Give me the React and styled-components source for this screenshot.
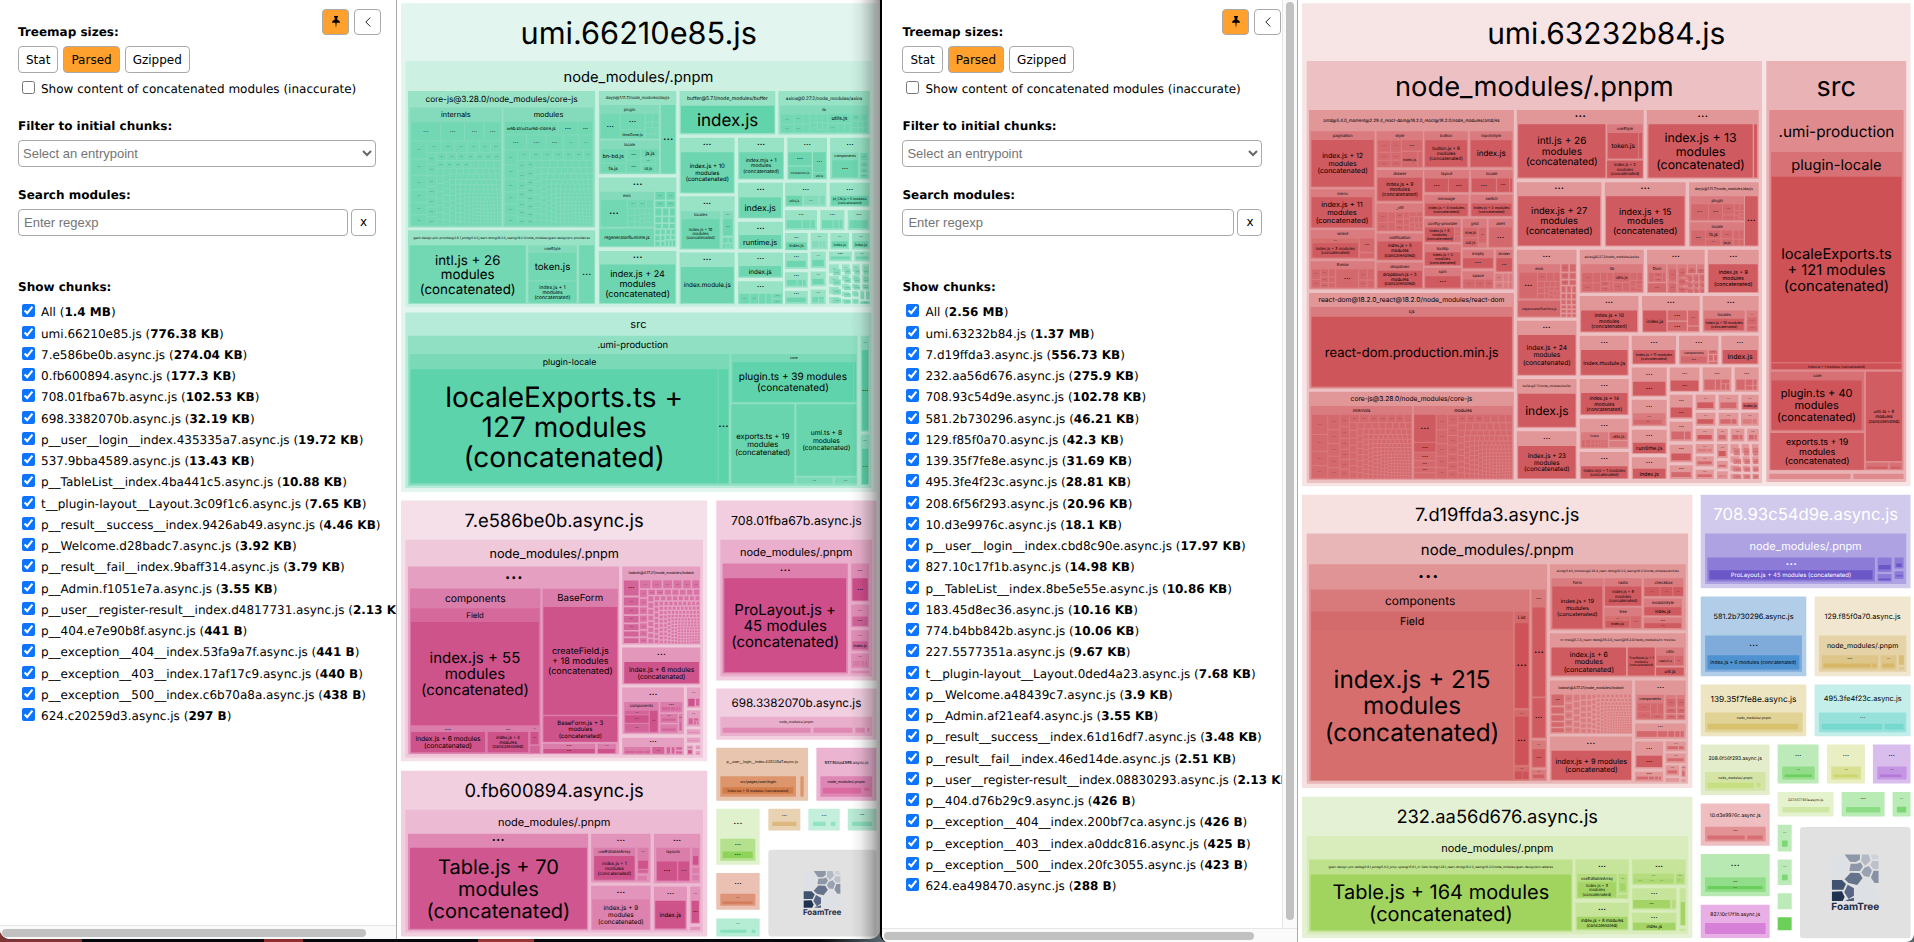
import React from "react";
import styled, { createGlobalStyle, css } from "styled-components";

const GlobalStyle = createGlobalStyle`
  html, body { margin: 0; height: 100%; background: #07080d; }
  *, *::before, *::after { box-sizing: border-box; }
  #root { height: 100%; }
`;

/* ---------- page shell ---------- */

const Desktop = styled.main`
  display: flex;
  min-height: 100vh;
  font-family: Verdana, "DejaVu Sans", sans-serif;
  font-size: 12px;
  text-rendering: geometricPrecision;
  color: #000;
  background: linear-gradient(
    to right,
    #7d3434 0 82px,
    #07080d 82px 264px,
    #8d2f2f 264px 303px,
    #07080d 303px 478px,
    #963737 478px 534px,
    #07080d 534px 820px,
    #55656b 880px
  );
`;

const Window = styled.section`
  position: relative;
  display: flex;
  min-width: 0;
  height: 100vh;
  overflow: hidden;
  background: #fff;
  ${(p) =>
    p.$behind
      ? css`
          flex: 0 1 46%;
          height: calc(100vh - 3px);
          border-radius: 0 0 10px 10px;
          &::after {
            content: "";
            position: absolute;
            inset: 0 0 0 auto;
            width: 30px;
            background: linear-gradient(
              to right,
              rgba(0, 0, 0, 0),
              rgba(0, 0, 0, 0.06) 35%,
              rgba(0, 0, 0, 0.22) 70%,
              rgba(0, 0, 0, 0.42)
            );
          }
        `
      : css`
          flex: 1 1 0;
          border-left: 2px solid #000;
          border-radius: 0 0 8px 8px;
        `}
`;

const Sidebar = styled.aside`
  flex: none;
  width: ${(p) => p.$width}px;
  display: grid;
  grid-template-columns: minmax(0, 1fr) auto;
  grid-template-rows: minmax(0, 1fr) auto;
  border-right: 1px solid #aaa;
  background: #fff;
`;

const Panel = styled.div`
  position: relative;
  overflow: hidden;
  white-space: nowrap;
  padding: 24px 20px 0 ${(p) => p.$inset}px;
`;

const VerticalTrack = styled.div`
  width: 15px;
  padding: 2px 3px 8px;
  display: flex;
  background: #fafafa;
  border-left: 1px solid #e6e6e6;
`;

const HorizontalTrack = styled.div`
  grid-column: 1 / -1;
  height: 14px;
  padding: 3px ${(p) => p.$rest}px 2px 2px;
  display: flex;
  background: #fafafa;
  border-top: 1px solid #e6e6e6;
`;

const Thumb = styled.div`
  flex: 1;
  border-radius: 4px;
  background: #c1c1c1;
`;

const ChartPane = styled.div`
  flex: 1;
  min-width: 0;
  overflow: hidden;
`;

/* ---------- sidebar controls ---------- */

const PanelActions = styled.div`
  position: absolute;
  top: 9px;
  right: ${(p) => p.$right}px;
  display: flex;
  gap: 5px;
`;

const buttonBase = css`
  height: 27px;
  padding: 0 7px;
  border: 1px solid #aaa;
  border-radius: 4px;
  color: #000;
  font: inherit;
  line-height: 16px;
  background: ${(p) => (p.$active ? "#ffa12c" : "#fff")};
`;

const IconButton = styled.button`
  ${buttonBase}
  width: 27px;
  height: 26px;
  padding: 0;
  display: flex;
  align-items: center;
  justify-content: center;
`;

const SizeButton = styled.button`
  ${buttonBase}
`;

const ClearButton = styled.button`
  ${buttonBase}
  width: 25px;
  padding: 0 0 2px;
`;

const Field = styled.div`
  margin-top: ${(p) => p.$gap || 0}px;
`;

const Heading = styled.div`
  display: block;
  margin-bottom: 6px;
  font-weight: bold;
  line-height: 16px;
`;

const ButtonRow = styled.div`
  display: flex;
  gap: ${(p) => p.$gap}px;
`;

const CheckLabel = styled.label`
  display: flex;
  align-items: center;
  gap: 6px;
  height: 21px;
  padding-left: 4px;
  line-height: 23px;

  input {
    width: 13px;
    height: 13px;
    margin: 0 0 2px;
    accent-color: #0e74fd;
  }

  span {
    padding-top: 2px;
  }
`;

const OptionRow = styled.div`
  margin-top: 5px;
`;

const controlBase = css`
  width: 100%;
  height: 27px;
  border: 1px solid #aaa;
  border-radius: 4px;
  background: #fff;
  color: #757575;
  font-family: "Liberation Sans", Arial, sans-serif;
  font-size: 13px;
`;

const SelectBox = styled.div`
  position: relative;

  select {
    ${controlBase}
    appearance: none;
    padding: 0 24px 0 4px;
  }

  svg {
    position: absolute;
    top: 10px;
    right: 4px;
    pointer-events: none;
  }
`;

const SearchInput = styled.input`
  ${controlBase}
  flex: 1;
  min-width: 0;
  padding: 0 5px;

  &::placeholder {
    color: #757575;
  }
`;

const ChunkList = styled.ul`
  margin: 0;
  padding: 0;
  list-style: none;

  li:nth-child(4n + 1) {
    margin-bottom: 1px;
  }
`;

function PinIcon() {
  return (
    <svg width="8" height="12" viewBox="0 0 24 36" aria-hidden="true">
      <path d="M6 0H18V4H16V12C21 13 24 16 24 20H14L12 36L10 20H0C0 16 3 13 8 12V4H6Z" />
    </svg>
  );
}

function CollapseIcon() {
  return (
    <svg width="6" height="10" viewBox="0 0 6 10" fill="none" stroke="#222" aria-hidden="true">
      <path d="M5.3 0.5L0.8 5L5.3 9.5" />
    </svg>
  );
}

function ChevronIcon() {
  return (
    <svg width="10" height="7" viewBox="0 0 10 7" fill="none" stroke="#666" strokeWidth="2" aria-hidden="true">
      <path d="M1 1L5 5L9 1" />
    </svg>
  );
}

function ControlPanel({ id, width, inset, actionsRight, scrollable, rest, chunks }) {
  return (
    <Sidebar $width={width}>
      <Panel $inset={inset}>
        <PanelActions $right={actionsRight}>
          <IconButton type="button" $active aria-label="Pin sidebar">
            <PinIcon />
          </IconButton>
          <IconButton type="button" aria-label="Hide sidebar">
            <CollapseIcon />
          </IconButton>
        </PanelActions>
        <Field>
          <Heading>Treemap sizes:</Heading>
          <ButtonRow $gap={5}>
            <SizeButton type="button">Stat</SizeButton>
            <SizeButton type="button" $active>
              Parsed
            </SizeButton>
            <SizeButton type="button">Gzipped</SizeButton>
          </ButtonRow>
          <OptionRow>
            <CheckLabel>
              <input type="checkbox" />
              <span>Show content of concatenated modules (inaccurate)</span>
            </CheckLabel>
          </OptionRow>
        </Field>
        <Field $gap={19}>
          <Heading as="label" htmlFor={`${id}-entry`}>
            Filter to initial chunks:
          </Heading>
          <SelectBox>
            <select id={`${id}-entry`}>
              <option>Select an entrypoint</option>
            </select>
            <ChevronIcon />
          </SelectBox>
        </Field>
        <Field $gap={20}>
          <Heading as="label" htmlFor={`${id}-search`}>
            Search modules:
          </Heading>
          <ButtonRow $gap={3}>
            <SearchInput id={`${id}-search`} type="text" placeholder="Enter regexp" />
            <ClearButton type="button">x</ClearButton>
          </ButtonRow>
        </Field>
        <Field $gap={43}>
          <Heading>Show chunks:</Heading>
          <ChunkList>
            {chunks.map(([name, size]) => (
              <li key={name}>
                <CheckLabel>
                  <input type="checkbox" defaultChecked />
                  <span>
                    {name} (<strong>{size}</strong>)
                  </span>
                </CheckLabel>
              </li>
            ))}
          </ChunkList>
        </Field>
      </Panel>
      {scrollable && (
        <VerticalTrack aria-hidden="true">
          <Thumb />
        </VerticalTrack>
      )}
      <HorizontalTrack $rest={rest} aria-hidden="true">
        <Thumb />
      </HorizontalTrack>
    </Sidebar>
  );
}

/* ---------- treemap drawing ---------- */

const ChartSvg = styled.svg`
  display: block;
  width: 100%;
  height: auto;
  font-family: Inter, "Liberation Sans", sans-serif;
`;

const D = "…";

/* A group or leaf: edges, fill, label, label size, lower edge of the title band. */
function Cell({ d, ink }) {
  const [x1, y1, x2, y2, fill, label, size, band] = d;
  const cx = (x1 + x2) / 2;
  const cy = (y1 + (band || y2)) / 2;
  let text = null;
  if (label) {
    const lines = label.split("|");
    const s = size || 22;
    const pitch = s * 1.08;
    const drop = label === D ? s * 0.05 : s * 0.38;
    text = lines.map((line, i) => (
      <text key={i} x={cx} y={cy + drop + (i - (lines.length - 1) / 2) * pitch} fontSize={s} textAnchor="middle" fill={ink}>
        {line}
      </text>
    ));
  }
  return (
    <g>
      <rect x={x1} y={y1} width={x2 - x1} height={y2 - y1} fill={fill} rx="2" />
      {text}
    </g>
  );
}

/* Squarified layout of many small modules whose sizes fall off by a power law. */
function squarify(x1, y1, x2, y2, n, flat) {
  const weights = Array.from({ length: n }, (_, i) => Math.pow(i + flat, -1));
  const sum = weights.reduce((a, b) => a + b, 0);
  const areas = weights.map((w) => (w / sum) * (x2 - x1) * (y2 - y1));
  const out = [];
  let x = x1;
  let y = y1;
  let i = 0;
  while (i < n) {
    const w = x2 - x;
    const h = y2 - y;
    const side = Math.min(w, h);
    let row = [];
    let total = 0;
    let worst = Infinity;
    while (i < n) {
      const t = total + areas[i];
      const first = row.length ? row[0] : areas[i];
      const next = Math.max((side * side * first) / (t * t), (t * t) / (side * side * areas[i]));
      if (next > worst) break;
      worst = next;
      total = t;
      row.push(areas[i]);
      i += 1;
    }
    const depth = total / side;
    let at = 0;
    row.forEach((a) => {
      const len = a / depth;
      out.push(w < h ? [x + at, y, len, depth] : [x, y + at, depth, len]);
      at += len;
    });
    if (w < h) y += depth;
    else x += depth;
  }
  return out;
}

function Mosaic({ d, ink }) {
  const [x1, y1, x2, y2, fill, n, gap = 3, flat = 4] = d;
  return (
    <g>
      {squarify(x1, y1, x2, y2, n, flat).map(([x, y, w, h], i) => {
        const g = Math.min(gap, Math.min(w, h) * 0.4);
        return (
          <g key={i}>
            <rect x={x + g / 2} y={y + g / 2} width={w - g} height={h - g} fill={fill} />
            {w > 24 && h > 12 && (
              <text x={x + w / 2} y={y + h / 2 + 1} fontSize={w > 50 ? 20 : 12} textAnchor="middle" fill={ink} opacity={w > 50 ? 1 : 0.6}>
                {D}
              </text>
            )}
          </g>
        );
      })}
    </g>
  );
}

/* A small package: a title band with dots above one or more tiles. */
function Mini({ d, ink }) {
  const [x1, y1, x2, y2, fill, inner, n = 1] = d;
  const h = y2 - y1;
  const pad = Math.min(4, (x2 - x1) * 0.12);
  const top = y1 + h * 0.5;
  return (
    <g>
      <rect x={x1} y={y1} width={x2 - x1} height={h} fill={fill} />
      {h > 26 && (
        <text x={(x1 + x2) / 2} y={y1 + h * 0.26} fontSize={x2 - x1 > 60 ? 18 : 12} textAnchor="middle" fill={ink}>
          {D}
        </text>
      )}
      {squarify(x1 + pad, top, x2 - pad, y2 - pad, n, 1).map(([x, y, w, hh], i) => (
        <rect key={i} x={x + 1} y={y} width={Math.max(w - 3, 1)} height={Math.max(hh - 2, 1)} fill={inner} />
      ))}
    </g>
  );
}

function Part({ dx = 0, dy = 0, ink = "#000", items }) {
  return (
    <g transform={`translate(${dx} ${dy})`}>
      {items.map((it, i) => {
        const [kind, ...d] = it;
        if (kind === "c") return <Cell key={i} d={d} ink={ink} />;
        if (kind === "m") return <Mosaic key={i} d={d} ink={ink} />;
        return <Mini key={i} d={d} ink={ink} />;
      })}
    </g>
  );
}

const LOGO = [
  ["8,0 32,0 50,28 48,46 28,72 0,72 0,8", "#dde1e6"],
  ["38,0 84,0 84,15 72,23 54,22", "#8d97a8"],
  ["90,0 110,0 116,18 100,34 88,20", "#b3bac5"],
  ["117,0 134,0 140,6 140,14 121,15", "#cfd3d9"],
  ["121,20 140,20 140,44 124,44 115,32", "#bcc2cb"],
  ["56,28 74,28 86,24 93,36 84,50 52,50", "#8d97a8"],
  ["97,40 111,35 120,48 112,68 97,66 88,54", "#99a2b2"],
  ["125,49 140,49 140,86 128,86 117,70", "#8791a3"],
  ["38,75 56,55 82,56 92,71 76,92 50,86", "#65738b"],
  ["0,77 30,77 42,89 34,106 0,106", "#3f5270"],
  ["47,91 66,102 66,124 50,134 37,114", "#566684"],
  ["0,112 30,111 38,128 32,140 0,140", "#1f3350"],
  ["40,140 46,136 66,130 66,140", "#4c5d7c"],
  ["98,72 114,75 126,92 140,92 140,134 134,140 72,140 72,106 84,89", "#dde1e6"],
];

function FoamTreeBadge({ x, y, width, height, logo, logoX, logoY, textY, size }) {
  return (
    <g>
      <rect x={x} y={y} width={width} height={height} rx="10" fill="#e1e1e1" />
      <g transform={`translate(${logoX} ${logoY}) scale(${logo / 140})`}>
        {LOGO.map(([points, fill]) => (
          <polygon key={points} points={points} fill={fill} />
        ))}
      </g>
      <text x={logoX + logo / 2} y={textY} fontSize={size} fontWeight="700" textAnchor="middle" fill="#1e2d48">
        FoamTree
      </text>
    </g>
  );
}

const lines3 = (first) => `${first}|modules|(concatenated)`;
const lines2 = (first) => `${first}|(concatenated)`;

const G1 = "#98e2c6";
const G2 = "#84dbbc";
const G3 = "#6dd6b0";
const GT = "#72d7b3";

const greenPackages = [
  ["c", 15, 10, 1440, 1475, "#e2f5ee", "umi.66210e85.js", 92, 183],
  ["c", 28, 183, 1425, 920, "#ccf1e3", "node_modules/.pnpm", 44, 273],
  ["c", 36, 273, 597, 682, G1, "core-js@3.28.0/node_modules/core-js", 25, 322],
  ["c", 42, 322, 317, 679, G2, "internals", 22, 365],
  ["m", 45, 365, 315, 677, GT, 210, 3, 4],
  ["c", 322, 322, 592, 679, G2, "modules", 22, 365],
  ["c", 326, 366, 484, 403, GT, "web.structured-clone.js", 13],
  ["c", 487, 366, 543, 403, GT, D],
  ["c", 546, 366, 589, 403, GT, D, 18],
  ["m", 325, 404, 590, 677, GT, 200, 3, 7],
  ["c", 36, 690, 597, 911, G1, "@ant-design+pro-provider@2.8.7_antd@5.4.0_react-dom@18.2.0_react@18.2.0/node_modules/@ant-design/pro-provider/es", 9, 733],
  ["c", 41, 735, 389, 908, GT, lines3("intl.js + 26"), 40],
  ["c", 396, 735, 542, 908, G2, "useStyle", 12, 757],
  ["c", 398, 758, 540, 840, GT, "token.js", 29],
  ["c", 398, 844, 540, 907, GT, lines3("index.js + 1"), 15],
  ["c", 549, 735, 594, 908, GT, D, 32],

  ["c", 608, 273, 840, 522, G1, "dayjs@1.11.7/node_modules/dayjs", 12, 314],
  ["c", 611, 315, 789, 417, G2, "plugin", 12, 340],
  ["c", 614, 342, 670, 414, GT, D, 26],
  ["c", 673, 342, 745, 387, GT, D, 26],
  ["c", 673, 390, 745, 414, GT, "timeZone.js", 11],
  ["m", 748, 340, 787, 416, GT, 10],
  ["c", 794, 315, 837, 520, GT, D, 36],
  ["c", 611, 420, 789, 520, G2, "locale", 12, 445],
  ["c", 614, 447, 688, 488, GT, "bn-bd.js", 16],
  ["c", 614, 491, 688, 516, GT, "fa.js", 14],
  ["c", 692, 447, 732, 478, GT, D, 16],
  ["c", 692, 481, 732, 516, GT, D, 16],
  ["c", 736, 447, 787, 473, GT, "ja.js", 15],
  ["c", 736, 476, 777, 490, GT, D, 10],
  ["c", 736, 494, 777, 516, GT, "id.js", 12],
  ["c", 780, 476, 787, 516, GT],

  ["c", 608, 532, 840, 741, G1, D, 34, 573],
  ["c", 611, 575, 773, 682, G2, "esm", 12, 598],
  ["c", 614, 600, 692, 679, GT, D, 34],
  ["m", 694, 599, 772, 680, GT, 22],
  ["c", 611, 685, 773, 738, GT, "regeneratorRuntime.js", 13],
  ["m", 775, 573, 838, 739, G3, 26, 5, 7],
  ["c", 608, 752, 840, 911, G1, D, 34, 792],
  ["c", 611, 793, 837, 908, G3, lines3("index.js + 24"), 27],

  ["c", 850, 273, 1137, 403, G1, "buffer@5.7.1/node_modules/buffer", 15, 314],
  ["c", 854, 317, 1134, 399, "#62d4ab", "index.js", 51],
  ["c", 1146, 273, 1420, 403, G1, "axios@0.27.2/node_modules/axios", 14, 314],
  ["c", 1151, 316, 1415, 399, G2, "lib", 11, 341],
  ["m", 1153, 342, 1293, 398, GT, 14],
  ["c", 1296, 342, 1362, 368, GT, "utils.js", 16],
  ["m", 1295, 370, 1363, 398, GT, 3],
  ["m", 1364, 342, 1413, 398, GT, 8],

  ["c", 850, 413, 1015, 580, G1, D, 30, 454],
  ["c", 854, 456, 1012, 577, G3, lines3("index.js + 10"), 18],
  ["c", 1025, 413, 1163, 538, G1, D, 28, 454],
  ["c", 1029, 456, 1160, 535, G3, lines3("index.mjs + 1"), 15],
  ["c", 1173, 413, 1292, 538, G1, D, 26, 454],
  ["c", 1176, 456, 1246, 496, G3, D],
  ["c", 1176, 499, 1246, 535, G3, "conversion.js", 9],
  ["c", 1250, 456, 1288, 516, G3, D, 20],
  ["c", 1250, 518, 1288, 535, G3, "util.js", 9],
  ["c", 1301, 413, 1420, 538, G1, D, 26, 454],
  ["c", 1306, 457, 1386, 533, G2, "components", 11, 478],
  ["c", 1308, 480, 1383, 531, G3, D],
  ["m", 1390, 457, 1415, 535, GT, 4],
  ["c", 850, 588, 1015, 748, G1, D, 28, 632],
  ["c", 854, 633, 972, 746, G2, "locales", 12, 655],
  ["c", 857, 657, 969, 743, G3, lines3("index.js + 10"), 12],
  ["c", 979, 633, 1010, 707, G2, D, 12, 655],
  ["c", 981, 657, 1008, 705, G3, D, 14],
  ["m", 978, 711, 1010, 746, GT, 5],
  ["c", 1025, 548, 1160, 655, G1, D, 28, 590],
  ["c", 1029, 591, 1154, 652, G3, "index.js", 26],
  ["c", 1166, 548, 1290, 620, G1, D, 24, 586],
  ["c", 1170, 587, 1217, 616, G3, "utils.js", 10],
  ["c", 1222, 587, 1266, 614, G2, D, 12],
  ["c", 1270, 587, 1285, 614, G2],
  ["c", 1300, 548, 1420, 620, G1, D, 24, 586],
  ["c", 1304, 587, 1416, 616, G3, lines2("pt_CN.js + 5 modules"), 10],
  ["c", 1025, 665, 1160, 747, G1, D, 28, 703],
  ["c", 1029, 704, 1154, 745, G3, "runtime.js", 22],
  ["s", 1166, 630, 1262, 690, G1, GT, 3],
  ["s", 1272, 630, 1344, 690, G1, GT, 3],
  ["s", 1354, 630, 1420, 690, G1, GT],
  ["c", 850, 757, 1015, 912, G1, D, 30, 799],
  ["c", 854, 800, 1012, 908, G3, "index.module.js", 19],
  ["c", 1025, 757, 1160, 833, G1, D, 26, 796],
  ["c", 1029, 797, 1154, 829, G3, "index.js", 19],
  ["c", 1025, 843, 1160, 912, G1, D, 26, 877],
  ["m", 1028, 879, 1158, 910, GT, 6],
  ["c", 1166, 698, 1234, 750, G1, D, 16, 725],
  ["c", 1169, 726, 1231, 748, G3, "index.js", 12],
  ["s", 1243, 698, 1294, 748, G1, G2, 4],
  ["c", 1302, 698, 1358, 748, G1, D, 12, 722],
  ["c", 1306, 723, 1354, 742, G3, "index.js", 10],
  ["c", 1367, 698, 1420, 748, G1, D, 12, 722],
  ["c", 1371, 723, 1416, 742, G3, "index.js", 10],
  ["s", 1166, 758, 1234, 806, G1, G3],
  ["s", 1166, 816, 1234, 862, G1, GT, 3],
  ["s", 1166, 872, 1234, 912, G1, G3],
  ["s", 1243, 754, 1288, 804, G1, G3],
  ["s", 1243, 814, 1288, 858, G1, G3],
  ["s", 1243, 868, 1288, 912, G1, GT, 3],
  ["s", 1298, 754, 1366, 783, G1, GT],
  ["s", 1374, 754, 1420, 783, G1, GT],
  ["m", 1294, 788, 1422, 914, G1, 20, 9, 12],
  ["m", 1304, 800, 1422, 914, G2, 20, 22, 12],

  ["c", 28, 937, 1425, 1463, "#b6ebd9", "src", 33, 1006],
  ["c", 36, 1006, 1383, 1456, "#90e1c3", ".umi-production", 28, 1060],
  ["c", 41, 1061, 999, 1452, "#7ad9b7", "plugin-locale", 26, 1106],
  ["c", 44, 1107, 964, 1448, "#5cd3aa", "localeExports.ts +|127 modules|(concatenated)", 84],
  ["c", 967, 1107, 996, 1448, "#5cd3aa", D, 36],
  ["c", 1005, 1061, 1380, 1207, "#7ad9b7", "core", 11, 1085],
  ["c", 1009, 1086, 1370, 1204, "#5fd3ab", lines2("plugin.ts + 39 modules"), 30],
  ["c", 1373, 1086, 1379, 1204, "#5fd3ab"],
  ["c", 1005, 1212, 1194, 1449, "#68d5ae", lines3("exports.ts + 19"), 23],
  ["c", 1200, 1212, 1380, 1426, "#68d5ae", lines3("umi.ts + 8"), 20],
  ["c", 1200, 1431, 1308, 1449, "#7ad9b7", D, 12],
  ["c", 1316, 1431, 1380, 1449, "#7ad9b7", D, 12],
  ["c", 1393, 1006, 1418, 1294, "#90e1c3", D, 12, 1048],
  ["c", 1397, 1049, 1415, 1290, "#5cd3aa", D, 22],
  ["c", 1393, 1302, 1418, 1454, "#90e1c3", D, 12, 1342],
  ["c", 1397, 1345, 1415, 1451, "#5cd3aa", D, 20],
];

const P1 = "#e59fc1";
const P2 = "#db7dab";
const P3 = "#d2649a";
const PL = "#cf538b";

const pinkChunks = [
  ["c", 15, 15, 933, 797, "#f5dfe8", "7.e586be0b.async.js", 55, 133],
  ["c", 28, 133, 920, 786, "#efc8da", "node_modules/.pnpm", 38, 213],
  ["c", 36, 213, 669, 776, P1, D, 64, 279],
  ["c", 42, 279, 433, 774, P2, "components", 31, 338],
  ["c", 44, 338, 430, 690, "#d6699b", "Field", 23, 378],
  ["c", 45, 379, 428, 688, PL, lines3("index.js + 55"), 45],
  ["c", 44, 694, 268, 772, P2, D, 22, 708],
  ["c", 45, 709, 267, 770, PL, lines2("index.js + 6 modules"), 20],
  ["c", 273, 694, 398, 772, P2, D, 16, 708],
  ["c", 275, 709, 396, 770, PL, lines3("index.js + 4"), 13],
  ["c", 402, 694, 430, 748, P2, D, 10, 708],
  ["c", 403, 709, 427, 746, PL, D, 12],
  ["c", 402, 751, 430, 772, P3],
  ["c", 439, 280, 665, 740, P2, "BaseForm", 29, 333],
  ["c", 442, 334, 663, 657, PL, "createField.js|+ 18 modules|(concatenated)", 27],
  ["c", 442, 662, 663, 738, PL, lines3("BaseForm.js + 3"), 18],
  ["c", 441, 744, 597, 774, P2, D, 18, 758],
  ["c", 442, 760, 596, 772, PL, D, 16],
  ["c", 604, 744, 660, 774, P2, D, 14, 758],
  ["c", 605, 760, 656, 772, PL],
  ["c", 678, 213, 912, 447, P1, "lodash@4.17.21/node_modules/lodash", 11, 252],
  ["c", 683, 255, 727, 300, P3, D, 22],
  ["c", 683, 306, 727, 330, P3, D, 12],
  ["c", 683, 335, 727, 356, P3, D, 12],
  ["c", 683, 361, 727, 381, P3, D, 12],
  ["c", 683, 386, 727, 403, P3, D, 12],
  ["c", 683, 408, 727, 423, P3],
  ["c", 683, 428, 727, 442, P3],
  ["m", 729, 252, 911, 445, "#d973a4", 190, 5, 12],
  ["c", 678, 456, 912, 567, "#e397bb", D, 32, 497],
  ["c", 684, 499, 908, 563, PL, lines2("index.js + 6 modules"), 20],
  ["c", 678, 576, 863, 716, P1, D, 30, 618],
  ["c", 684, 619, 787, 712, P2, "components", 12, 643],
  ["c", 687, 645, 757, 656, P3, D, 10],
  ["c", 687, 659, 757, 681, PL, D, 14],
  ["c", 687, 685, 757, 708, P3, D, 14],
  ["c", 761, 645, 784, 708, PL, D, 12],
  ["s", 792, 619, 858, 650, P2, P3, 4],
  ["s", 792, 655, 844, 682, P2, P3],
  ["s", 792, 686, 844, 711, P2, P3],
  ["s", 848, 655, 858, 706, P2, P3],
  ["c", 872, 576, 912, 636, P1, D, 14, 608],
  ["c", 876, 609, 895, 632, PL],
  ["c", 899, 609, 909, 630, P3],
  ["s", 872, 644, 912, 692, P1, P3, 4],
  ["s", 872, 701, 912, 717, P1, P2],
  ["s", 872, 726, 912, 741, P1, P2],
  ["c", 678, 726, 863, 778, P1, D, 26, 752],
  ["c", 683, 754, 763, 774, P2],
  ["m", 685, 764, 762, 774, P3, 3],
  ["c", 768, 754, 804, 774, P3, D, 10],
  ["m", 809, 752, 860, 776, P3, 4, 5, 8],
  ["s", 872, 749, 891, 778, P1, PL],
  ["s", 898, 749, 912, 761, P1, P2],
  ["s", 898, 766, 912, 778, P1, P2],

  ["c", 960, 15, 1440, 555, "#f1cddf", "708.01fba67b.async.js", 37, 133],
  ["c", 972, 133, 1427, 543, "#e9afcc", "node_modules/.pnpm", 33, 204],
  ["c", 979, 204, 1354, 534, "#dd80ae", D, 38, 247],
  ["c", 984, 248, 1349, 529, "#cd4e89", "ProLayout.js +|45 modules|(concatenated)", 45],
  ["c", 1364, 204, 1418, 318, "#e28fb8", D, 16, 247],
  ["c", 1368, 248, 1414, 315, "#cd4e89", D, 22],
  ["c", 1364, 327, 1418, 395, "#e28fb8", D, 14, 362],
  ["c", 1368, 363, 1414, 391, P3, D, 16],
  ["c", 1364, 404, 1418, 466, "#e28fb8", D, 14, 436],
  ["c", 1368, 437, 1414, 461, P3, "index.js", 11],
  ["s", 1364, 474, 1418, 518, "#e28fb8", P2, 3],
  ["c", 1364, 525, 1418, 534, "#e28fb8"],

  ["c", 960, 579, 1440, 732, "#f1cee0", "698.3382070b.async.js", 35, 663],
  ["c", 972, 663, 1427, 721, "#e9aecb", "node_modules/.pnpm", 10, 695],
  ["c", 979, 696, 1243, 711, "#df88b3"],
  ["c", 1251, 696, 1368, 711, "#df88b3"],
  ["c", 1377, 696, 1405, 711, "#df88b3"],
  ["c", 1412, 696, 1419, 708, "#df88b3"],
];

const leftBottom = [
  ["c", 15, 90, 933, 587, "#f1cfdf", "0.fb600894.async.js", 55, 207],
  ["c", 28, 207, 920, 575, "#ecbad3", "node_modules/.pnpm", 33, 279],
  ["c", 36, 279, 576, 568, "#de88b3", D, 46, 320],
  ["c", 42, 321, 572, 564, "#cf568f", lines3("Table.js + 70"), 60],
  ["c", 585, 279, 763, 425, "#e294bb", D, 30, 320],
  ["c", 592, 321, 717, 420, P2, "useEditableArray", 12, 345],
  ["c", 594, 346, 715, 417, PL, lines3("index.js + 1"), 14],
  ["c", 724, 321, 757, 398, P2, D, 12, 345],
  ["c", 726, 360, 755, 384, PL],
  ["c", 726, 388, 755, 396, P3],
  ["c", 724, 405, 752, 419, P2],
  ["c", 585, 435, 763, 568, "#e294bb", D, 30, 475],
  ["c", 588, 476, 760, 565, "#dd82ae", lines3("index.js + 9"), 19],
  ["c", 773, 279, 912, 427, "#e294bb", D, 28, 320],
  ["c", 780, 321, 881, 422, P2, "layouts", 12, 345],
  ["c", 782, 362, 842, 419, PL, D, 24],
  ["c", 846, 362, 879, 419, PL, D, 20],
  ["c", 888, 321, 908, 375, P2],
  ["c", 890, 346, 906, 372, PL],
  ["c", 888, 381, 908, 398, P2],
  ["c", 888, 403, 908, 419, P2],
  ["c", 773, 437, 872, 568, "#e294bb", D, 26, 478],
  ["c", 777, 480, 868, 563, PL, "index.js", 18],
  ["c", 882, 437, 912, 549, "#e294bb", D, 14, 478],
  ["c", 886, 480, 908, 546, PL, D, 18],
  ["c", 882, 558, 912, 568, "#e294bb"],

  ["c", 960, 21, 1235, 180, "#e8c5ae", "p__user__login__index.435335a7.async.js", 11, 107],
  ["c", 972, 107, 1199, 168, "#dd966c", "src/pages/user/login", 11, 139],
  ["c", 979, 140, 1191, 159, "#d27c49", "index.tsx + 15 modules (concatenated)", 10],
  ["c", 1212, 107, 1222, 168, "#dd966c"],
  ["c", 1260, 21, 1440, 180, "#ebb5d2", "537.9bba4589.async.js", 12, 107],
  ["c", 1272, 107, 1427, 168, "#de86b4", "node_modules/.pnpm", 11, 140],
  ["c", 1280, 141, 1394, 158, "#d9699f"],
  ["c", 1404, 141, 1419, 150, "#d9699f"],
  ["c", 960, 204, 1090, 372, "#dff2cd", D, 32, 294],
  ["c", 972, 294, 1077, 360, "#b5e08e", D, 22, 332],
  ["c", 979, 332, 1069, 352, "#8fd35a", D, 22],
  ["c", 1116, 204, 1212, 269, "#e8d2b2", D, 18, 243],
  ["c", 1128, 243, 1200, 256, "#ddb87e"],
  ["c", 1236, 204, 1330, 269, "#c3efdc", D, 18, 243],
  ["c", 1250, 243, 1288, 256, "#93e2c4"],
  ["c", 1303, 243, 1317, 256, "#93e2c4"],
  ["c", 1354, 204, 1440, 269, "#b9ebd5", D, 16, 243],
  ["c", 1367, 243, 1427, 256, "#8bdebe"],
  ["c", 960, 397, 1090, 507, "#ebc1b3", D, 26, 459],
  ["c", 972, 459, 1077, 495, "#de9478", D, 12, 480],
  ["c", 979, 482, 1069, 489, "#d37a5b"],
  ["c", 960, 533, 1090, 587, "#b5ecd4", D, 14, 567],
  ["c", 972, 567, 1051, 576, "#87dfbd"],
  ["c", 1066, 567, 1077, 576, "#87dfbd"],
];

const R1 = "#e19698";
const R2 = "#da7b7f";
const R3 = "#cf5a5f";
const RT = "#d4696d";

const antdPackages = [
  ["c", 36, 10, 1863, 1460, "#f7e5e5", "umi.63232b84.js", 90, 183],
  ["c", 50, 183, 1417, 1450, "#edc1c3", "node_modules/.pnpm", 82, 330],
  ["c", 57, 330, 672, 869, R1, "antd@5.4.0_moment@2.29.4_react-dom@18.2.0_react@18.2.0/node_modules/antd/es", 13, 394],
  ["c", 62, 394, 254, 563, R2, "pagination", 12, 419],
  ["c", 65, 420, 251, 560, R3, lines3("index.js + 12"), 21],
  ["c", 62, 568, 254, 685, R2, "menu", 12, 591],
  ["c", 65, 592, 247, 682, R3, lines3("index.js + 11"), 22],
  ["c", 62, 690, 254, 777, R2, "select", 12, 714],
  ["c", 66, 716, 206, 774, "#d6706f", D, 12, 729],
  ["c", 68, 730, 204, 772, R3, lines2("index.js + 3 modules"), 12],
  ["c", 210, 716, 252, 756, RT, D, 16],
  ["c", 210, 760, 252, 774, RT],
  ["c", 62, 784, 254, 866, R2, "theme", 12, 807],
  ["m", 64, 807, 136, 864, RT, 8],
  ["c", 139, 808, 204, 863, RT, D, 24],
  ["m", 206, 807, 253, 864, RT, 4],
  ["c", 260, 394, 399, 503, R2, "style", 12, 419],
  ["m", 262, 420, 334, 502, RT, 6],
  ["c", 336, 421, 396, 452, RT, D, 18],
  ["c", 336, 456, 382, 501, RT, "index.js", 11],
  ["c", 385, 456, 396, 501, RT],
  ["c", 260, 510, 399, 605, R2, "drawer", 12, 533],
  ["c", 263, 534, 396, 602, R3, lines3("index.js + 9"), 15],
  ["c", 260, 611, 399, 694, R2, "_util", 12, 635],
  ["m", 262, 636, 398, 693, RT, 20],
  ["c", 260, 701, 399, 782, R2, "notification", 12, 724],
  ["c", 263, 725, 396, 779, R3, lines3("index.js + 5"), 13],
  ["c", 260, 788, 399, 866, R2, "dropdown", 12, 812],
  ["c", 263, 813, 396, 863, R3, lines3("dropdown.js + 3"), 13],
  ["c", 403, 394, 534, 503, R2, "button", 12, 419],
  ["c", 406, 421, 531, 500, R3, lines3("button.js + 6"), 14],
  ["c", 540, 394, 668, 503, R2, "input/style", 12, 419],
  ["c", 543, 421, 665, 500, R3, "index.js", 24],
  ["c", 403, 510, 538, 578, R2, "layout", 12, 534],
  ["c", 406, 536, 474, 576, R3, D],
  ["c", 477, 536, 535, 576, R3, D],
  ["c", 543, 510, 668, 578, R2, "locale", 12, 534],
  ["c", 546, 536, 618, 576, R3, D],
  ["c", 622, 536, 658, 576, R3, D, 18],
  ["c", 661, 536, 667, 576, R3],
  ["c", 403, 585, 536, 650, R2, "message", 12, 609],
  ["c", 406, 611, 533, 648, R3, lines2("index.js + 4 modules"), 11],
  ["c", 542, 585, 668, 650, R2, "switch", 12, 609],
  ["c", 545, 611, 665, 648, R3, lines2("index.js + 3 modules"), 11],
  ["c", 403, 657, 513, 728, R2, "config-provider", 12, 682],
  ["c", 406, 683, 492, 725, R3, lines3("index.js + 5"), 11],
  ["m", 494, 682, 512, 726, RT, 4],
  ["c", 518, 657, 591, 743, R2, "grid", 12, 682],
  ["c", 520, 684, 563, 712, RT, "row.js", 12],
  ["c", 520, 716, 563, 741, RT, "col.js", 12],
  ["c", 567, 684, 588, 728, RT, D, 12],
  ["c", 596, 657, 668, 743, R2, "alert", 12, 682],
  ["c", 598, 683, 666, 741, RT, D, 26],
  ["c", 403, 733, 513, 798, R2, "tooltip", 12, 756],
  ["c", 406, 757, 511, 796, R3, lines3("index.js + 3"), 11],
  ["c", 403, 804, 513, 866, R2, "spin", 12, 828],
  ["c", 406, 829, 511, 863, R3, D, 24],
  ["c", 518, 750, 611, 807, R2, "empty", 12, 773],
  ["c", 520, 775, 609, 804, R3, D],
  ["c", 518, 814, 611, 866, R2, "space", 12, 838],
  ["m", 519, 838, 610, 865, RT, 3],
  ["c", 618, 750, 668, 816, R2, "divider", 11, 773],
  ["c", 620, 775, 666, 814, R3, D, 18],
  ["m", 615, 820, 669, 867, R2, 6],
  ["c", 57, 880, 672, 1167, R1, "react-dom@18.2.0_react@18.2.0/node_modules/react-dom", 20, 921],
  ["c", 62, 922, 668, 1163, R2, "cjs", 13, 950],
  ["c", 65, 951, 666, 1160, "#ce555a", "react-dom.production.min.js", 39],
  ["c", 57, 1176, 672, 1440, R1, "core-js@3.28.0/node_modules/core-js", 20, 1218],
  ["c", 62, 1219, 367, 1438, R2, "internals", 13, 1243],
  ["m", 64, 1244, 365, 1436, RT, 210, 3, 5],
  ["c", 371, 1219, 668, 1438, R2, "modules", 13, 1243],
  ["c", 373, 1245, 437, 1326, R3, D, 32],
  ["c", 373, 1329, 437, 1356, R3, D],
  ["c", 373, 1359, 437, 1382, RT, D],
  ["c", 373, 1385, 437, 1401, RT, D, 16],
  ["c", 373, 1404, 437, 1418, RT, D, 16],
  ["c", 373, 1421, 437, 1435, RT],
  ["m", 439, 1244, 667, 1436, RT, 180, 3, 9],
];

const redPackages = [
  ["c", 51, 30, 432, 237, R1, D, 40, 71],
  ["c", 55, 73, 317, 233, R3, lines3("intl.js + 26"), 30],
  ["c", 322, 73, 429, 178, R2, "useStyle", 12, 97],
  ["c", 325, 99, 415, 175, R3, "token.js", 19],
  ["c", 418, 99, 427, 175, R3],
  ["c", 322, 182, 429, 234, R3, lines3("index.js + 2"), 12],
  ["c", 441, 30, 777, 237, R1, D, 38, 71],
  ["c", 446, 73, 759, 233, R3, lines3("index.js + 13"), 37],
  ["c", 763, 73, 772, 233, R3],
  ["c", 51, 247, 305, 440, R1, D, 34, 287],
  ["c", 55, 289, 301, 437, R3, lines3("index.js + 27"), 28],
  ["c", 315, 247, 558, 440, R1, D, 34, 287],
  ["c", 319, 289, 554, 437, R3, lines3("index.js + 15"), 27],
  ["c", 568, 247, 777, 440, R1, "dayjs@1.11.7/node_modules/dayjs", 11, 287],
  ["c", 572, 289, 733, 363, R2, "plugin", 12, 312],
  ["c", 575, 313, 625, 360, RT, D, 20],
  ["c", 628, 313, 667, 360, RT, D, 18],
  ["c", 670, 313, 702, 343, RT, D, 12],
  ["c", 670, 346, 702, 360, RT],
  ["m", 704, 312, 733, 361, RT, 7],
  ["c", 572, 367, 733, 438, R2, "locale", 12, 390],
  ["c", 575, 392, 616, 436, RT, D, 18],
  ["c", 619, 392, 662, 415, RT, "fa.js", 13],
  ["c", 619, 418, 662, 436, RT, D, 12],
  ["c", 666, 392, 698, 415, RT, D, 12],
  ["c", 666, 418, 698, 436, RT, "ja.js", 11],
  ["m", 701, 391, 732, 437, RT, 4],
  ["c", 736, 289, 774, 437, R3, D, 30],
  ["c", 51, 450, 230, 654, R1, D, 28, 491],
  ["c", 55, 493, 181, 599, R2, "esm", 12, 517],
  ["c", 59, 519, 111, 594, RT, D, 28],
  ["m", 113, 518, 180, 596, RT, 18],
  ["c", 55, 602, 181, 650, RT, "regeneratorRuntime.js", 10],
  ["m", 183, 491, 230, 653, RT, 24, 5, 8],
  ["c", 240, 450, 432, 580, R1, "axios@0.27.2/node_modules/axios", 10, 491],
  ["c", 244, 493, 429, 577, R2, "lib", 12, 517],
  ["m", 246, 518, 340, 575, RT, 9],
  ["c", 342, 519, 389, 546, RT, "utils.js", 12],
  ["m", 341, 548, 390, 575, RT, 2],
  ["m", 391, 518, 428, 575, RT, 7],
  ["c", 442, 450, 615, 580, R1, D, 28, 491],
  ["c", 445, 493, 499, 547, R2, "Dom", 12, 517],
  ["m", 446, 518, 498, 546, RT, 4],
  ["c", 445, 550, 499, 577, RT, D, 14],
  ["m", 502, 492, 614, 578, R2, 16],
  ["m", 504, 504, 616, 582, RT, 16, 9],
  ["c", 624, 450, 777, 580, R1, D, 28, 491],
  ["c", 627, 493, 774, 577, R3, lines3("index.js + 9"), 16],
  ["c", 240, 589, 416, 698, R1, D, 28, 630],
  ["c", 244, 632, 412, 695, R3, lines3("index.js + 10"), 15],
  ["c", 427, 589, 600, 698, R1, D, 28, 630],
  ["c", 430, 632, 500, 695, R3, "index.js", 14],
  ["c", 504, 632, 561, 662, RT, D],
  ["c", 504, 666, 561, 693, RT, D],
  ["c", 565, 632, 597, 677, RT, D, 14],
  ["c", 565, 680, 597, 694, RT],
  ["c", 609, 589, 777, 698, R1, D, 28, 630],
  ["c", 612, 632, 735, 694, R2, "locales", 12, 655],
  ["c", 615, 657, 732, 691, R3, lines2("index.js + 10 modules"), 11],
  ["m", 739, 631, 775, 696, R2, 3],
  ["m", 742, 652, 773, 694, RT, 2],
  ["c", 51, 663, 230, 828, R1, D, 28, 704],
  ["c", 55, 706, 227, 825, R3, lines3("index.js + 24"), 20],
  ["c", 240, 708, 387, 828, R1, D, 26, 749],
  ["c", 244, 751, 383, 825, R3, "index.module.js", 17],
  ["c", 396, 708, 529, 794, R1, D, 26, 749],
  ["c", 400, 751, 525, 791, R3, lines2("index.js + 11 modules"), 11],
  ["c", 538, 708, 656, 794, R1, D, 26, 749],
  ["c", 542, 751, 623, 791, R2, "components", 10, 769],
  ["c", 544, 770, 621, 789, RT, D, 16],
  ["m", 626, 750, 654, 793, RT, 4, 4],
  ["c", 665, 708, 777, 794, R1, D, 24, 749],
  ["c", 669, 751, 773, 791, R3, "index.js", 21],
  ["c", 51, 838, 230, 985, R1, "buffer@5.7.1/node_modules/buffer", 9, 881],
  ["c", 55, 882, 227, 981, R3, "index.js", 36],
  ["c", 240, 838, 387, 947, R1, D, 26, 879],
  ["c", 244, 880, 383, 944, R3, lines3("index.js + 14"), 15],
  ["c", 396, 803, 501, 890, R1, D, 24, 845],
  ["c", 400, 846, 497, 887, R3, D, 24],
  ["c", 396, 900, 501, 980, R1, D, 22, 940],
  ["c", 400, 941, 497, 977, R2, D, 14, 960],
  ["c", 402, 960, 486, 974, RT, D, 12],
  ["c", 396, 990, 501, 1063, R1, D, 24, 1028],
  ["c", 400, 1029, 497, 1060, R3, "runtime.js", 17],
  ["c", 396, 1073, 501, 1138, R1, D, 24, 1106],
  ["c", 400, 1107, 497, 1136, R3, "index.js", 16],
  ["c", 240, 957, 387, 1047, R1, D, 26, 997],
  ["c", 244, 998, 325, 1044, R2, "Icons", 10, 1021],
  ["m", 245, 1020, 324, 1043, RT, 16],
  ["c", 329, 998, 383, 1020, RT, "utils.js", 12],
  ["c", 329, 1024, 383, 1042, R2],
  ["c", 240, 1057, 387, 1138, R1, D, 26, 1098],
  ["c", 244, 1100, 383, 1136, R3, lines2("index.mjs + 1 modules"), 12],
  ["c", 51, 995, 230, 1138, R1, D, 26, 1037],
  ["c", 55, 1039, 227, 1136, R3, lines3("index.js + 23"), 19],
  ["c", 510, 803, 599, 876, R1, D, 18, 841],
  ["c", 513, 842, 596, 873, R3, D, 18],
  ["s", 609, 803, 695, 876, R1, RT, 5],
  ["s", 705, 803, 777, 876, R1, RT, 5],
  ["c", 510, 885, 579, 957, R1, D, 18, 922],
  ["c", 513, 923, 576, 953, R3, D, 18],
  ["s", 588, 885, 647, 931, R1, R3],
  ["s", 657, 885, 716, 931, R1, RT],
  ["c", 725, 885, 777, 931, R1, D, 12, 907],
  ["c", 728, 908, 774, 928, R3, "index.js", 11],
  ["s", 588, 939, 647, 978, R1, R3],
  ["s", 657, 939, 716, 978, R1, RT, 2],
  ["s", 724, 939, 777, 978, R1, R2, 2],
  ["s", 510, 966, 579, 1025, R1, RT, 2],
  ["s", 510, 1035, 579, 1088, R1, R3],
  ["s", 510, 1097, 579, 1138, R1, RT],
  ["s", 588, 987, 642, 1025, R1, R3],
  ["s", 652, 987, 684, 1025, R1, RT],
  ["s", 693, 987, 734, 1025, R1, RT, 2],
  ["s", 743, 987, 777, 1025, R1, RT, 2],
  ["s", 588, 1033, 642, 1062, R1, R2, 2],
  ["s", 588, 1070, 642, 1100, R1, RT],
  ["s", 588, 1110, 642, 1138, R1, RT],
  ["s", 652, 1033, 684, 1075, R1, R3],
  ["s", 652, 1084, 684, 1107, R1, RT],
  ["s", 652, 1115, 684, 1138, R1, R2, 2],
  ["m", 688, 1029, 781, 1142, R1, 12, 9, 12],
  ["m", 696, 1040, 781, 1142, R2, 12, 19, 12],

  ["c", 800, -117, 1220, 1147, "#e9b2b5", "src", 81, 30],
  ["c", 809, 30, 1212, 1112, "#df8b8e", ".umi-production", 46, 155],
  ["c", 814, 156, 1207, 810, "#d77175", "plugin-locale", 44, 230],
  ["c", 816, 231, 1205, 787, "#cd5155", "localeExports.ts|+ 121 modules|(concatenated)", 44],
  ["c", 816, 791, 1205, 808, "#cd5155", "index.ts + 1 modules (concatenated)", 10],
  ["c", 814, 816, 1093, 993, "#d77175", "core", 12, 840],
  ["c", 816, 842, 1086, 990, "#ce5459", lines3("plugin.ts + 40"), 33],
  ["c", 812, 1000, 1093, 1110, "#d15c61", lines3("exports.ts + 19"), 27],
  ["c", 1099, 816, 1207, 1084, "#d15c61", lines3("umi.ts + 8"), 13],
  ["c", 1099, 1089, 1166, 1109, "#d77175"],
  ["c", 1170, 1089, 1207, 1109, "#d77175"],
  ["c", 1102, 1101, 1163, 1107, "#d15c61"],
  ["c", 1173, 1101, 1202, 1107, "#d15c61"],
  ["c", 809, 1122, 1053, 1138, "#df8b8e"],
  ["c", 1061, 1122, 1212, 1138, "#df8b8e"],
];

const rightMiddle = [
  ["c", 36, 45, 1208, 926, "#f6e0e0", "7.d19ffda3.async.js", 55, 162],
  ["c", 50, 162, 1195, 913, "#e9b6b8", "node_modules/.pnpm", 45, 254],
  ["c", 57, 254, 772, 905, "#e09495", D, 74, 329],
  ["c", 62, 330, 719, 903, "#d87a7b", "components", 36, 395],
  ["c", 64, 396, 669, 902, "#d36a6b", "Field", 32, 453],
  ["c", 65, 454, 668, 900, "#d66e6d", lines3("index.js + 215"), 73],
  ["c", 674, 396, 717, 687, "#d36a6b", "List", 14, 430],
  ["c", 676, 431, 715, 685, "#ce5257", D, 36],
  ["c", 674, 692, 717, 858, "#d36a6b", D, 12, 711],
  ["c", 676, 712, 715, 856, "#ce5257", D, 30],
  ["c", 674, 862, 717, 900, "#d36a6b", D, 10, 874],
  ["m", 674, 875, 717, 900, "#ce5257", 2],
  ["c", 725, 330, 768, 776, "#d87a7b", D, 18, 382],
  ["c", 728, 384, 766, 651, R3, D, 34],
  ["c", 728, 656, 766, 774, R3, D, 26],
  ["c", 725, 783, 768, 865, "#d87a7b", D, 12, 808],
  ["c", 728, 809, 766, 862, R3, D, 18],
  ["s", 725, 871, 768, 901, "#d87a7b", R3],
  ["c", 780, 254, 1188, 452, R1, "antd@5.4.0_moment@2.29.4_react-dom@18.2.0_react@18.2.0/node_modules/antd/es", 9, 295],
  ["c", 785, 296, 941, 449, R2, "form", 12, 320],
  ["c", 788, 321, 937, 446, R3, lines3("index.js + 19"), 17],
  ["c", 944, 296, 1056, 380, R2, "radio", 12, 320],
  ["c", 946, 321, 1054, 378, R3, lines3("index.js + 5"), 12],
  ["c", 1062, 296, 1181, 351, R2, "checkbox", 12, 320],
  ["m", 1063, 321, 1181, 350, R3, 3],
  ["c", 944, 384, 1056, 447, R2, "tree", 12, 409],
  ["c", 946, 410, 1020, 445, "#d6706f", D, 12, 424],
  ["c", 948, 424, 1018, 443, R3, "index.js", 11],
  ["c", 1023, 410, 1053, 445, RT, D, 12],
  ["c", 1062, 357, 1177, 409, R2, "modal/style", 12, 382],
  ["c", 1064, 383, 1174, 406, R3, "index.js", 13],
  ["c", 1062, 414, 1177, 447, R2, D, 16, 431],
  ["c", 1064, 431, 1174, 445, R3, D, 14],
  ["c", 780, 461, 1188, 593, R1, "rc-tree@5.7.3_react-dom@18.2.0_react@18.2.0/node_modules/rc-tree/es", 10, 502],
  ["c", 785, 504, 1009, 588, R3, lines3("index.js + 6"), 21],
  ["c", 1014, 504, 1095, 588, R3, lines3("TreeNode.js + 1"), 10],
  ["c", 1099, 504, 1182, 559, R2, "utils", 12, 528],
  ["c", 1101, 529, 1153, 557, RT, "treeUtil.js", 9],
  ["c", 1156, 529, 1180, 557, RT, D, 10],
  ["c", 1099, 564, 1182, 588, R3, "util.js", 13],
  ["c", 780, 603, 1027, 763, R1, "lodash@4.17.21/node_modules/lodash", 11, 643],
  ["c", 785, 645, 822, 678, RT, D, 16],
  ["c", 785, 683, 822, 702, RT],
  ["c", 785, 707, 822, 724, RT],
  ["c", 785, 728, 822, 742, RT],
  ["c", 785, 746, 822, 758, RT],
  ["m", 824, 643, 1026, 762, R2, 190, 5, 12],
  ["c", 780, 771, 1027, 904, R1, D, 32, 812],
  ["c", 785, 814, 1024, 901, R3, lines2("index.js + 9 modules"), 22],
  ["c", 1036, 603, 1188, 722, R1, D, 26, 644],
  ["c", 1040, 646, 1122, 720, R2, "components", 11, 669],
  ["m", 1042, 670, 1121, 718, RT, 5],
  ["m", 1126, 645, 1186, 721, R2, 6],
  ["m", 1128, 655, 1187, 721, RT, 6, 7],
  ["s", 1036, 732, 1188, 778, R1, RT, 5],
  ["c", 1036, 786, 1120, 867, R1, D, 22, 828],
  ["c", 1040, 829, 1117, 863, R3, D],
  ["s", 1036, 877, 1120, 906, R1, RT, 4],
  ["s", 1128, 786, 1188, 815, R1, RT, 2],
  ["s", 1128, 822, 1188, 851, R1, RT],
  ["s", 1128, 858, 1168, 888, R1, RT],
  ["s", 1175, 858, 1188, 893, R1, RT],
  ["c", 1128, 896, 1168, 907, R1],
  ["c", 1175, 899, 1188, 907, R1],

  ["c", 36, 952, 1208, 1376, "#e5f1d4", "232.aa56d676.async.js", 55, 1070],
  ["c", 50, 1070, 1195, 1365, "#d9edbc", "node_modules/.pnpm", 33, 1140],
  ["c", 57, 1140, 848, 1357, "#bde18c", "@ant-design+pro-table@3.6.1_antd@5.4.0_prop-types@15.8.1_rc-field-form@1.28.1_react-dom@18.2.0_react@18.2.0/node_modules/@ant-design/pro-table/es", 9, 1183],
  ["c", 62, 1185, 844, 1353, "#a1d35f", lines2("Table.js + 164 modules"), 60],
  ["c", 857, 1140, 1017, 1259, "#c6e59b", D, 28, 1183],
  ["c", 862, 1184, 981, 1256, "#b5dd80", "useEditableArray", 12, 1208],
  ["c", 864, 1209, 979, 1254, "#a4d465", lines3("index.js + 3"), 12],
  ["s", 986, 1184, 1012, 1240, "#b5dd80", "#a4d465"],
  ["c", 986, 1246, 1012, 1256, "#b5dd80"],
  ["c", 857, 1270, 1017, 1354, "#c6e59b", D, 28, 1311],
  ["c", 861, 1312, 1013, 1350, "#a4d465", lines2("index.js + 8 modules"), 13],
  ["c", 1027, 1140, 1188, 1217, "#c6e59b", D, 28, 1181],
  ["c", 1030, 1182, 1153, 1213, "#b5dd80", D, 12, 1197],
  ["m", 1031, 1198, 1152, 1212, "#abd870", 4],
  ["s", 1158, 1182, 1184, 1213, "#b5dd80", "#a4d465", 2],
  ["c", 1027, 1227, 1160, 1291, "#c6e59b", D, 24, 1260],
  ["c", 1030, 1262, 1141, 1287, "#a4d465", D, 16],
  ["c", 1146, 1262, 1158, 1287, "#b5dd80"],
  ["c", 1027, 1300, 1160, 1355, "#c6e59b", D, 24, 1329],
  ["c", 1030, 1330, 1157, 1352, "#a4d465", "index.js", 13],
  ["c", 1170, 1227, 1188, 1340, "#c6e59b"],
  ["c", 1173, 1268, 1186, 1337, "#a4d465"],
  ["c", 1170, 1348, 1188, 1355, "#c6e59b"],
];

const violetChunk = [
  ["c", 33, 45, 663, 326, "#d1caed", "708.93c54d9e.async.js", 50, 162],
  ["c", 46, 162, 650, 313, "#aea2e2", "node_modules/.pnpm", 33, 234],
  ["c", 53, 234, 556, 306, "#8c7cd7", D, 40, 272],
  ["c", 59, 272, 549, 300, "#6c57c9", "ProLayout.js + 45 modules (concatenated)", 18],
  ["c", 564, 234, 606, 277, "#8c7cd7"],
  ["c", 567, 256, 603, 270, "#6c57c9"],
  ["c", 615, 234, 642, 267, "#8c7cd7"],
  ["c", 620, 252, 637, 262, "#6c57c9"],
  ["c", 564, 283, 606, 306, "#8c7cd7"],
  ["c", 567, 297, 603, 302, "#6c57c9"],
  ["c", 615, 275, 642, 298, "#8c7cd7"],
  ["c", 618, 287, 640, 291, "#6c57c9"],
];

const smallChunks = [
  ["c", 33, 351, 350, 590, "#b2cde8", "581.2b730296.async.js", 22, 468],
  ["c", 46, 468, 337, 577, "#7eabd9", D, 32, 527],
  ["c", 53, 527, 329, 570, "#4f92d2", "index.js + 6 modules (concatenated)", 15],
  ["c", 375, 351, 663, 590, "#f1e6d0", "129.f85f0a70.async.js", 22, 468],
  ["c", 388, 468, 650, 577, "#e5d2a6", "node_modules/.pnpm", 21, 527],
  ["c", 396, 527, 566, 570, "#dec68b", D, 18, 550],
  ["c", 402, 552, 543, 564, "#d6b767"],
  ["c", 548, 552, 561, 564, "#d6b767"],
  ["c", 573, 527, 620, 570, "#dec68b", D, 12, 550],
  ["c", 578, 552, 614, 564, "#d6b767"],
  ["c", 628, 527, 643, 556, "#d9be79"],
  ["c", 628, 563, 643, 570, "#dec68b"],
  ["c", 33, 615, 350, 770, "#ede4c2", "139.35f7fe8e.async.js", 25, 699],
  ["c", 46, 699, 339, 758, "#e1d295", "node_modules/.pnpm", 10, 732],
  ["c", 53, 733, 326, 750, "#d8c26d"],
  ["c", 375, 615, 663, 770, "#c4eeea", "495.3fe4f23c.async.js", 22, 699],
  ["c", 388, 699, 650, 758, "#97e1db", D, 20, 732],
  ["c", 396, 733, 578, 750, "#76d9cf"],
  ["c", 585, 733, 642, 750, "#76d9cf"],
  ["c", 33, 795, 240, 947, "#e3edcb", "208.6f56f293.async.js", 15, 878],
  ["c", 46, 878, 228, 934, "#d3e4a4", "node_modules/.pnpm", 10, 909],
  ["c", 53, 910, 192, 926, "#c6df81"],
  ["c", 201, 910, 213, 922, "#c6df81"],
  ["c", 264, 795, 387, 912, "#bceab8", D, 22, 861],
  ["c", 278, 861, 375, 900, "#93dc8a", D, 12, 884],
  ["c", 285, 885, 367, 893, "#6dcf60"],
  ["c", 412, 795, 526, 912, "#e9eec3", D, 22, 861],
  ["c", 425, 861, 514, 900, "#d9e091", D, 12, 884],
  ["c", 432, 885, 505, 893, "#ccd66d"],
  ["c", 550, 795, 663, 912, "#d9bdec", D, 22, 861],
  ["c", 563, 861, 651, 900, "#c495e2", D, 12, 884],
  ["c", 570, 885, 636, 893, "#b379d9"],
  ["c", 264, 938, 432, 1011, "#e4f2ce", "227.5577351a.async.js", 10, 982],
  ["c", 278, 983, 420, 999, "#cfe7a4"],
  ["c", 456, 938, 585, 1011, "#b9ebb5", D, 18, 980],
  ["c", 469, 983, 572, 999, "#8bdc84"],
  ["c", 609, 938, 663, 1011, "#b9ebb5", D, 12, 980],
  ["c", 622, 982, 650, 999, "#7cd673"],
  ["c", 33, 972, 240, 1099, "#efbec1", "10.d3e9976c.async.js", 15, 1042],
  ["c", 46, 1042, 228, 1086, "#e29294", D, 16, 1066],
  ["c", 53, 1068, 165, 1080, "#d86e72"],
  ["c", 173, 1068, 219, 1080, "#d86e72"],
  ["c", 33, 1124, 240, 1251, "#b9e9b3", D, 32, 1194],
  ["c", 46, 1194, 228, 1238, "#92dd89", D, 16, 1220],
  ["c", 53, 1220, 219, 1230, "#6bcf5e", D, 14],
  ["c", 33, 1276, 240, 1376, "#e8aee6", "827.10c17f1b.async.js", 15, 1331],
  ["c", 46, 1331, 228, 1364, "#d680d8"],
  ["c", 264, 1036, 306, 1116, "#bceab8", D, 12, 1082],
  ["c", 277, 1083, 294, 1102, "#7fd676"],
  ["c", 264, 1140, 306, 1217, "#bceab8", D, 12, 1184],
  ["c", 277, 1185, 294, 1203, "#7fd676"],
  ["c", 264, 1242, 306, 1290, "#bceab8"],
  ["c", 264, 1314, 306, 1353, "#6ccf59"],
];

function LeftTreemap() {
  return (
    <ChartSvg viewBox="3 0 1449 2817" aria-label="Treemap of umi.66210e85.js build">
      <Part items={greenPackages} />
      <Part dy={1485} items={pinkChunks} />
      <Part dy={2220} items={leftBottom} />
      <FoamTreeBadge x={1116} y={2547} width={324} height={260} logo={110} logoX={1222} logoY={2611} textY={2742} size={24} />
    </ChartSvg>
  );
}

function RightTreemap() {
  return (
    <ChartSvg viewBox="24 0 1848 2826" aria-label="Treemap of umi.63232b84.js build">
      <Part items={antdPackages} />
      <Part dx={630} dy={300} items={redPackages} />
      <Part dy={1440} items={rightMiddle} />
      <Part dx={1200} dy={1440} ink="#fff" items={violetChunk} />
      <Part dx={1200} dy={1440} items={smallChunks} />
      <FoamTreeBadge x={1531} y={2483} width={332} height={334} logo={140} logoX={1627} logoY={2565} textY={2733} size={30} />
    </ChartSvg>
  );
}

const LEFT_CHUNKS = [
  ["All", "1.4 MB"],
  ["umi.66210e85.js", "776.38 KB"],
  ["7.e586be0b.async.js", "274.04 KB"],
  ["0.fb600894.async.js", "177.3 KB"],
  ["708.01fba67b.async.js", "102.53 KB"],
  ["698.3382070b.async.js", "32.19 KB"],
  ["p__user__login__index.435335a7.async.js", "19.72 KB"],
  ["537.9bba4589.async.js", "13.43 KB"],
  ["p__TableList__index.4ba441c5.async.js", "10.88 KB"],
  ["t__plugin-layout__Layout.3c09f1c6.async.js", "7.65 KB"],
  ["p__result__success__index.9426ab49.async.js", "4.46 KB"],
  ["p__Welcome.d28badc7.async.js", "3.92 KB"],
  ["p__result__fail__index.9baff314.async.js", "3.79 KB"],
  ["p__Admin.f1051e7a.async.js", "3.55 KB"],
  ["p__user__register-result__index.d4817731.async.js", "2.13 KB"],
  ["p__404.e7e90b8f.async.js", "441 B"],
  ["p__exception__404__index.53fa9a7f.async.js", "441 B"],
  ["p__exception__403__index.17af17c9.async.js", "440 B"],
  ["p__exception__500__index.c6b70a8a.async.js", "438 B"],
  ["624.c20259d3.async.js", "297 B"],
];

const RIGHT_CHUNKS = [
  ["All", "2.56 MB"],
  ["umi.63232b84.js", "1.37 MB"],
  ["7.d19ffda3.async.js", "556.73 KB"],
  ["232.aa56d676.async.js", "275.9 KB"],
  ["708.93c54d9e.async.js", "102.78 KB"],
  ["581.2b730296.async.js", "46.21 KB"],
  ["129.f85f0a70.async.js", "42.3 KB"],
  ["139.35f7fe8e.async.js", "31.69 KB"],
  ["495.3fe4f23c.async.js", "28.81 KB"],
  ["208.6f56f293.async.js", "20.96 KB"],
  ["10.d3e9976c.async.js", "18.1 KB"],
  ["p__user__login__index.cbd8c90e.async.js", "17.97 KB"],
  ["827.10c17f1b.async.js", "14.98 KB"],
  ["p__TableList__index.8be5e55e.async.js", "10.86 KB"],
  ["183.45d8ec36.async.js", "10.16 KB"],
  ["774.b4bb842b.async.js", "10.06 KB"],
  ["227.5577351a.async.js", "9.67 KB"],
  ["t__plugin-layout__Layout.0ded4a23.async.js", "7.68 KB"],
  ["p__Welcome.a48439c7.async.js", "3.9 KB"],
  ["p__Admin.af21eaf4.async.js", "3.55 KB"],
  ["p__result__success__index.61d16df7.async.js", "3.48 KB"],
  ["p__result__fail__index.46ed14de.async.js", "2.51 KB"],
  ["p__user__register-result__index.08830293.async.js", "2.13 KB"],
  ["p__404.d76b29c9.async.js", "426 B"],
  ["p__exception__404__index.200bf7ca.async.js", "426 B"],
  ["p__exception__403__index.a0ddc816.async.js", "425 B"],
  ["p__exception__500__index.20fc3055.async.js", "423 B"],
  ["624.ea498470.async.js", "288 B"],
];

export default function App() {
  return (
    <>
      <GlobalStyle />
      <Desktop>
        <Window $behind>
          <ControlPanel id="left" width={397} inset={18} actionsRight={15} rest={30} chunks={LEFT_CHUNKS} />
          <ChartPane>
            <LeftTreemap />
          </ChartPane>
        </Window>
        <Window>
          <ControlPanel id="right" width={416} inset={20} actionsRight={1} rest={43} scrollable chunks={RIGHT_CHUNKS} />
          <ChartPane>
            <RightTreemap />
          </ChartPane>
        </Window>
      </Desktop>
    </>
  );
}
